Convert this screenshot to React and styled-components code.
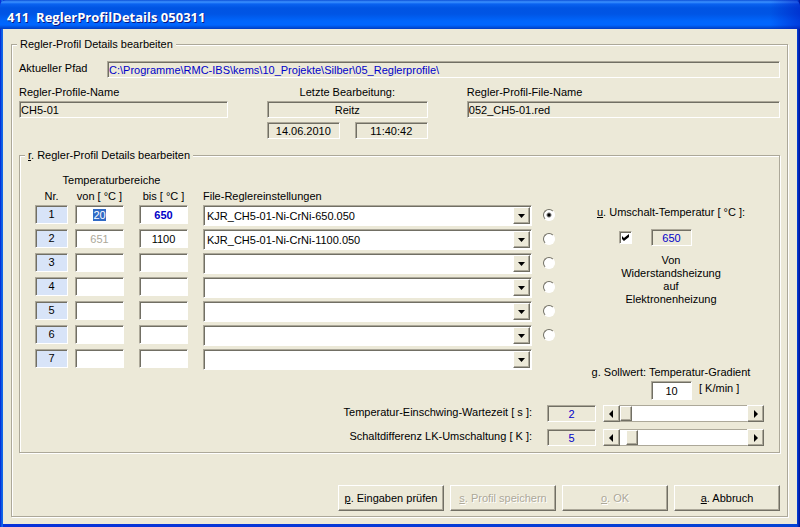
import { useEffect, useRef, useState } from 'react';
import styled, { createGlobalStyle, css } from 'styled-components';

const GlobalStyle = createGlobalStyle`
  * {
    box-sizing: border-box;
  }

  body {
    margin: 0;
    background: #ece9d8;
  }

  body, input, select, button {
    font-family: "Liberation Sans", Arial, sans-serif;
    font-size: 11px;
    line-height: 14px;
    color: #000;
  }

  ::selection {
    background: #316ac5;
    color: #fff;
  }
`;

const sunken = css`
  border: 1px solid;
  border-color: #aca899 #fff #fff #aca899;
  border-radius: 0;
  box-shadow: inset 1px 1px 0 #716f64;
`;

const raised = css`
  border: 1px solid;
  border-color: #fff #716f64 #716f64 #fff;
  border-radius: 0;
  box-shadow: inset -1px -1px 0 #aca899;
  background: #ece9d8;
`;

const Window = styled.div`
  min-height: 100vh;
  display: flex;
  flex-direction: column;
  background: linear-gradient(90deg, #0831d9 1px, #0855dd 1px, #166aee 3px, #0831d9 3px, #0443d4 calc(100% - 3px), #0030c8 calc(100% - 2px), #001090 100%);
`;

const TitleBar = styled.header`
  height: 29px;
  padding: 4px 7px 0;
  display: flex;
  align-items: center;
  border-radius: 6px 6px 0 0;
  background:
    linear-gradient(90deg, transparent calc(100% - 30px), rgba(0, 20, 190, 0.5)),
    linear-gradient(#0c50d8 0, #3c92ff 2px, #0a62f0 4px, #0054e3 8px, #0055e5 14px, #0066fc 21px, #0066ff 25px, #0048d0 28px, #003cc4);
`;

const Title = styled.h1`
  margin: 0;
  font-family: "Open Sans", sans-serif;
  font-size: 13px;
  line-height: 18px;
  font-weight: 700;
  color: #fff;
  text-shadow: 1px 1px 0 #0a1883;
  white-space: pre;
`;

const Body = styled.main`
  flex: 1;
  margin: 0 3px 3px;
  padding: 8px 9px 6px 8px;
  background: #ece9d8;
`;

const Group = styled.fieldset`
  min-width: 0;
  margin: 0;
  padding: 0 5px;
  border: 1px solid #aca899;
  box-shadow: 1px 1px 0 #fff, inset 1px 1px 0 #fff;
`;

const Legend = styled.legend`
  padding: 0 3px;
  background: #ece9d8;
`;

const Profile = styled.div`
  padding: 10px 2px 5px;
`;

const PathRow = styled.div`
  display: grid;
  grid-template-columns: 88px 1fr;
`;

const Field = styled.input`
  ${sunken}
  display: block;
  width: 100%;
  min-width: 0;
  height: ${(p) => (p.$tall ? 19 : 17)}px;
  padding: 0 1px;
  outline: none;
  background: ${(p) => p.$bg || '#ece9d8'};
  color: ${(p) => p.$color || '#000'};
  font-weight: ${(p) => (p.$bold ? 700 : 400)};
  text-align: ${(p) => (p.$center ? 'center' : 'left')};
`;

const InfoRow = styled.div`
  display: grid;
  grid-template-columns: 2fr 161px 3fr;
  gap: 39px;
  padding: 7px 0 9px;
`;

const InfoCell = styled.div`
  text-align: ${(p) => (p.$center ? 'center' : 'left')};

  label {
    display: block;
    margin-bottom: 2px;
  }
`;

const DateRow = styled.div`
  display: grid;
  grid-template-columns: 1fr 1fr;
  gap: 15px;
  margin-top: 4px;
`;

const Settings = styled.div`
  padding: 11px 10px 6px;
`;

const Columns = styled.div`
  display: flex;
  gap: 22px;
`;

const Ranges = styled.table`
  flex: 1;
  align-self: flex-start;
  table-layout: fixed;
  border-collapse: collapse;

  th {
    height: 16px;
    padding: 0;
    font-weight: 400;
    vertical-align: top;
  }

  td {
    height: 24px;
    padding: 0;
    vertical-align: top;
  }
`;

const Col = styled.col`
  width: ${(p) => p.$width};
`;

const Head = styled.th`
  && {
    padding-right: ${(p) => p.$gap || 0}px;
    text-align: ${(p) => (p.$left ? 'left' : 'center')};
  }
`;

const Cell = styled.td`
  && {
    padding-right: ${(p) => p.$gap || 0}px;
  }
`;

const Number = styled.div`
  ${sunken}
  height: 19px;
  line-height: 17px;
  background: #d8e4f8;
  text-align: center;
`;

const Combo = styled.div`
  ${sunken}
  display: grid;
  height: 21px;
  padding: 1px;
  background: #fff;

  > * {
    grid-area: 1 / 1;
  }
`;

const Select = styled.select`
  appearance: none;
  min-width: 0;
  height: 17px;
  padding: 0 20px 0 2px;
  border: 0;
  outline: none;
  background: #fff;
`;

const ComboArrow = styled.span`
  ${raised}
  width: 17px;
  height: 17px;
  justify-self: end;
  display: flex;
  align-items: center;
  justify-content: center;
  pointer-events: none;
`;

const Radio = styled.input`
  appearance: none;
  display: block;
  width: 12px;
  height: 12px;
  margin: 4px 0 0;
  border: 1px solid;
  border-color: #716f64 #fff #fff #716f64;
  border-radius: 50%;
  background: #fff;

  &:checked {
    background: radial-gradient(circle, #000 1px, #fff 3px);
  }
`;

const Side = styled.div`
  width: 186px;
  padding-top: 32px;
  text-align: center;
`;

const SwitchRow = styled.div`
  display: grid;
  grid-template-columns: 12px 41px;
  gap: 20px;
  align-items: center;
  padding-left: 41px;
  margin-top: 10px;
`;

const Checkbox = styled.input`
  ${sunken}
  appearance: none;
  display: block;
  width: 13px;
  height: 13px;
  margin: 0;
  background: #fff;

  &:checked::before {
    content: "";
    display: block;
    width: 7px;
    height: 7px;
    margin: 2px;
    background: #000;
    clip-path: polygon(0 28%, 28% 58%, 100% 0, 100% 42%, 28% 100%, 0 70%);
  }
`;

const Note = styled.p`
  margin: 8px 0 59px;
  line-height: 13px;
`;

const GradientRow = styled.div`
  display: grid;
  grid-template-columns: 41px auto;
  gap: 7px;
  padding-left: 73px;
  margin-top: 2px;
  text-align: left;
`;

const Sliders = styled.div`
  display: grid;
  grid-template-columns: 1fr 49px 161px;
  gap: 7px;
  margin-top: 5px;
`;

const SliderLabel = styled.label`
  padding-right: 8px;
  text-align: right;
`;

const ScrollBar = styled.div`
  display: flex;
  height: 17px;
`;

const ScrollButton = styled.button`
  ${raised}
  width: 17px;
  flex: none;
  padding: 0;
  display: flex;
  align-items: center;
  justify-content: center;
`;

const Range = styled.input`
  appearance: none;
  flex: 1;
  min-width: 0;
  height: 17px;
  margin: 0;
  border: solid #aca899;
  border-width: 1px 0;
  background: #fff;

  &::-webkit-slider-thumb {
    ${raised}
    appearance: none;
    width: 12px;
    height: 15px;
  }
`;

const Actions = styled.div`
  display: flex;
  justify-content: flex-end;
  gap: 6px;
  margin-top: 32px;
`;

const Button = styled.button`
  ${raised}
  width: 106px;
  height: 26px;
  padding: 0;

  &:disabled {
    color: #aca899;
    text-shadow: 1px 1px 0 #fff;
  }
`;

const rows = [
  { nr: 1, from: '20', to: '650', file: 'KJR_CH5-01-Ni-CrNi-650.050' },
  { nr: 2, from: '651', to: '1100', file: 'KJR_CH5-01-Ni-CrNi-1100.050' },
  { nr: 3, from: '', to: '', file: '' },
  { nr: 4, from: '', to: '', file: '' },
  { nr: 5, from: '', to: '', file: '' },
  { nr: 6, from: '', to: '', file: '' },
  { nr: 7, from: '', to: '', file: '' },
];

function Arrow({ dir }) {
  const points = {
    down: '0,2 7,2 3.5,6',
    left: '5,0 5,8 1,4',
    right: '2,0 2,8 6,4',
  };
  return (
    <svg width={dir === 'down' ? 7 : 8} height="8" aria-hidden="true">
      <polygon points={points[dir]} fill="#000" />
    </svg>
  );
}

function Slider({ id, label, value, onChange }) {
  return (
    <>
      <SliderLabel htmlFor={id}>{label}</SliderLabel>
      <Field value={value} readOnly $center $color="#0000c8" aria-label={label} />
      <ScrollBar>
        <ScrollButton type="button" aria-label="weniger" onClick={() => onChange(Math.max(2, value - 1))}>
          <Arrow dir="left" />
        </ScrollButton>
        <Range
          id={id}
          type="range"
          min="2"
          max="60"
          value={value}
          onChange={(e) => onChange(+e.target.value)}
        />
        <ScrollButton type="button" aria-label="mehr" onClick={() => onChange(Math.min(60, value + 1))}>
          <Arrow dir="right" />
        </ScrollButton>
      </ScrollBar>
    </>
  );
}

function App() {
  const firstInput = useRef(null);
  const [selectedRow, setSelectedRow] = useState(1);
  const [waitTime, setWaitTime] = useState(2);
  const [difference, setDifference] = useState(5);

  useEffect(() => {
    firstInput.current.focus();
    firstInput.current.select();
  }, []);

  return (
    <Window>
      <GlobalStyle />
      <TitleBar>
        <Title>411  ReglerProfilDetails 050311</Title>
      </TitleBar>
      <Body>
        <Group>
          <Legend>Regler-Profil Details bearbeiten</Legend>
          <Profile>
            <PathRow>
              <label htmlFor="path">Aktueller Pfad</label>
              <Field
                id="path"
                readOnly
                $color="#0000c8"
                defaultValue={'C:\\Programme\\RMC-IBS\\kems\\10_Projekte\\Silber\\05_Reglerprofile\\'}
              />
            </PathRow>
            <InfoRow>
              <InfoCell>
                <label htmlFor="name">Regler-Profile-Name</label>
                <Field id="name" readOnly defaultValue="CH5-01" />
              </InfoCell>
              <InfoCell $center>
                <label htmlFor="editor">Letzte Bearbeitung:</label>
                <Field id="editor" readOnly $center defaultValue="Reitz" />
                <DateRow>
                  <Field aria-label="Datum" readOnly $center defaultValue="14.06.2010" />
                  <Field aria-label="Uhrzeit" readOnly $center defaultValue="11:40:42" />
                </DateRow>
              </InfoCell>
              <InfoCell>
                <label htmlFor="file">Regler-Profil-File-Name</label>
                <Field id="file" readOnly defaultValue="052_CH5-01.red" />
              </InfoCell>
            </InfoRow>

            <Group>
              <Legend><u>r</u>. Regler-Profil Details bearbeiten</Legend>
              <Settings>
                <Columns>
                  <Ranges>
                    <colgroup>
                      <Col $width="40px" />
                      <Col $width="64px" />
                      <Col $width="64px" />
                      <Col $width="auto" />
                      <Col $width="13px" />
                    </colgroup>
                    <thead>
                      <tr>
                        <Head colSpan="3" $gap={15}>Temperaturbereiche</Head>
                        <Head colSpan="2" />
                      </tr>
                      <tr>
                        <Head $gap={7}>Nr.</Head>
                        <Head $gap={15}>von [ °C ]</Head>
                        <Head $gap={15}>bis [ °C ]</Head>
                        <Head $left $gap={11}>File-Reglereinstellungen</Head>
                        <Head />
                      </tr>
                    </thead>
                    <tbody>
                      {rows.map((row) => (
                        <tr key={row.nr}>
                          <Cell $gap={7}><Number>{row.nr}</Number></Cell>
                          <Cell $gap={15}>
                            <Field
                              ref={row.nr === 1 ? firstInput : null}
                              aria-label={`von ${row.nr}`}
                              defaultValue={row.from}
                              disabled={row.nr === 2}
                              $tall
                              $center
                              $bg="#fff"
                              $color={row.nr === 2 ? '#aca899' : '#000'}
                            />
                          </Cell>
                          <Cell $gap={15}>
                            <Field
                              aria-label={`bis ${row.nr}`}
                              defaultValue={row.to}
                              $tall
                              $center
                              $bg="#fff"
                              $bold={row.nr === 1}
                              $color={row.nr === 1 ? '#0000c8' : '#000'}
                            />
                          </Cell>
                          <Cell $gap={11}>
                            <Combo>
                              <Select aria-label={`Datei ${row.nr}`} defaultValue={row.file}>
                                <option>{row.file}</option>
                              </Select>
                              <ComboArrow><Arrow dir="down" /></ComboArrow>
                            </Combo>
                          </Cell>
                          <Cell>
                            {row.nr < 7 && (
                              <Radio
                                type="radio"
                                name="row"
                                aria-label={`Umschaltung ${row.nr}`}
                                checked={selectedRow === row.nr}
                                onChange={() => setSelectedRow(row.nr)}
                              />
                            )}
                          </Cell>
                        </tr>
                      ))}
                    </tbody>
                  </Ranges>

                  <Side>
                    <label htmlFor="switch"><u>u</u>. Umschalt-Temperatur [ °C ]:</label>
                    <SwitchRow>
                      <Checkbox id="switch" type="checkbox" defaultChecked />
                      <Field aria-label="Umschalt-Temperatur" readOnly $center $color="#0000c8" defaultValue="650" />
                    </SwitchRow>
                    <Note>
                      Von<br />Widerstandsheizung<br />auf<br />Elektronenheizung
                    </Note>
                    <label htmlFor="gradient"><u>g</u>. Sollwert: Temperatur-Gradient</label>
                    <GradientRow>
                      <Field id="gradient" $tall $center $bg="#fff" defaultValue="10" />
                      <span>[ K/min ]</span>
                    </GradientRow>
                  </Side>
                </Columns>

                <Sliders>
                  <Slider
                    id="wait"
                    label="Temperatur-Einschwing-Wartezeit [ s ]:"
                    value={waitTime}
                    onChange={setWaitTime}
                  />
                  <Slider
                    id="difference"
                    label="Schaltdifferenz LK-Umschaltung [ K ]:"
                    value={difference}
                    onChange={setDifference}
                  />
                </Sliders>
              </Settings>
            </Group>

            <Actions>
              <Button type="button"><u>p</u>. Eingaben prüfen</Button>
              <Button type="button" disabled><u>s</u>. Profil speichern</Button>
              <Button type="button" disabled><u>o</u>. OK</Button>
              <Button type="button"><u>a</u>. Abbruch</Button>
            </Actions>
          </Profile>
        </Group>
      </Body>
    </Window>
  );
}

export default App;
